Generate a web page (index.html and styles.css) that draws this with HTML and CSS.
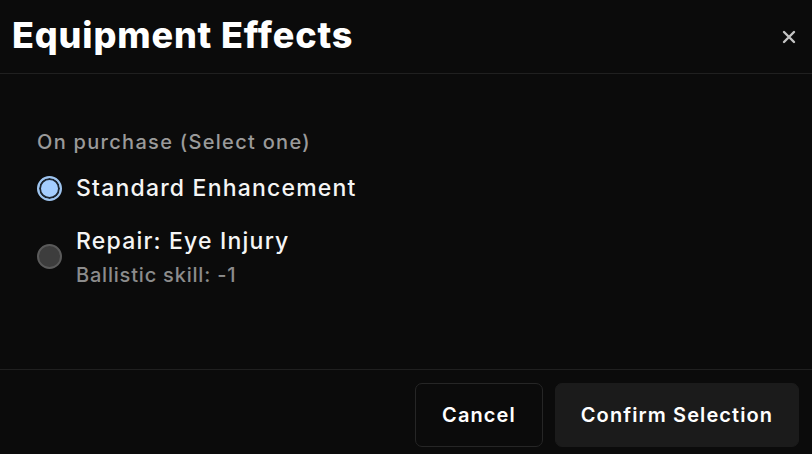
FILE: index.html
```html
<!DOCTYPE html>
<html lang="en">
<head>
  <meta charset="UTF-8">
  <title>Equipment Effects</title>
  <link rel="stylesheet" href="styles.css">
</head>
<body>
  <div class="dialog">
    <div class="dialog-header">
      <h1 class="dialog-title">Equipment Effects</h1>
      <button class="close-btn" aria-label="Close">
        <svg width="14" height="14" viewBox="0 0 14 14">
          <path d="M2 2L12 12M12 2L2 12" stroke="#c4c4c4" stroke-width="2.4" stroke-linecap="round"/>
        </svg>
      </button>
    </div>

    <div class="dialog-body">
      <div class="group-label">On purchase (Select one)</div>
      <!-- Effect options -->
      <label class="option">
        <span class="radio checked"></span>
        <span class="option-text">
          <span class="option-name">Standard Enhancement</span>
        </span>
      </label>
      <label class="option">
        <span class="radio"></span>
        <span class="option-text">
          <span class="option-name">Repair: Eye Injury</span>
          <span class="option-desc">Ballistic skill: -1</span>
        </span>
      </label>
    </div>

    <div class="dialog-footer">
      <button class="btn btn-outline">Cancel</button>
      <button class="btn btn-solid">Confirm Selection</button>
    </div>
  </div>
</body>
</html>
```

FILE: styles.css
```css
body {
  margin: 0;
  background: #0b0b0b;
  color: #fff;
  font-family: Inter, "Noto Sans", sans-serif;
}
.dialog {
  width: 812px;
  height: 454px;
  display: flex;
  flex-direction: column;
  overflow: hidden;
}
/* Header */
.dialog-header {
  display: flex;
  align-items: flex-start;
  justify-content: space-between;
  height: 73px;
  padding: 0 15px 0 12px;
  border-bottom: 1px solid #202020;
  box-sizing: content-box;
  flex: none;
}
.dialog-title {
  margin: 14px 0 0;
  font-size: 36px;
  line-height: 43px;
  font-weight: 800;
  letter-spacing: 0.85px;
}
.close-btn {
  margin-top: 29px;
  padding: 0;
  border: none;
  background: none;
  width: 16px;
  height: 16px;
  display: flex;
  align-items: center;
  justify-content: center;
}
/* Body */
.dialog-body {
  flex: 1;
  padding: 54px 37px 0;
  display: flex;
  flex-direction: column;
}
.group-label {
  font-size: 20px;
  line-height: 28px;
  font-weight: 500;
  color: #9a9a9a;
  letter-spacing: 1.3px;
  margin-bottom: 17px;
}
.option {
  display: flex;
  align-items: center;
  gap: 14px;
  margin-bottom: 23px;
}
.radio {
  width: 25px;
  height: 25px;
  box-sizing: border-box;
  border-radius: 50%;
  border: 2px solid #5a5a5a;
  background: #3d3d3d;
  flex: none;
  margin-top: -3px;
}
.radio.checked {
  border-color: #9ec4ef;
  background: #a4cdff;
  box-shadow: inset 0 0 0 2px #1c2530;
  margin-top: 0;
}
.option-text {
  display: flex;
  flex-direction: column;
}
.option-name {
  font-size: 23px;
  line-height: 30px;
  font-weight: 500;
  letter-spacing: 1.2px;
  color: #f5f5f5;
}
.option-desc {
  margin-top: 4px;
  font-size: 20px;
  line-height: 30px;
  font-weight: 500;
  letter-spacing: 0.8px;
  color: #8c8c8c;
}
/* Footer */
.dialog-footer {
  flex: none;
  border-top: 1px solid #202020;
  display: flex;
  justify-content: flex-end;
  gap: 12px;
  padding: 13px 13px 7px;
}
.btn {
  height: 64px;
  padding: 0;
  border-radius: 7px;
  font-family: inherit;
  font-size: 20px;
  font-weight: 600;
  letter-spacing: 1.1px;
  color: #fff;
}
.btn-outline {
  background: #0b0b0b;
  border: 1px solid #262626;
  width: 128px;
}
.btn-solid {
  background: #1b1b1b;
  border: 1px solid #1b1b1b;
  width: 244px;
}
```
